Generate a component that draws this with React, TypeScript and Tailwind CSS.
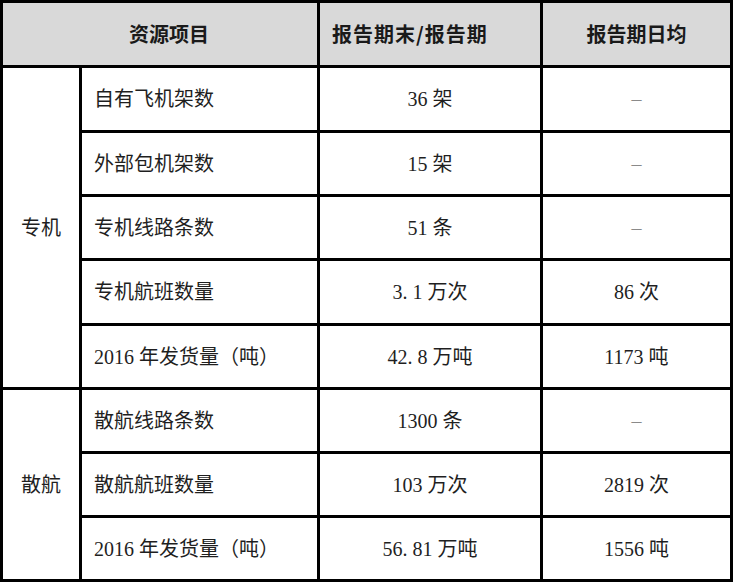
import React from 'react';

type Row = { name: string; total: string; daily: string };

const groups: { label: string; rows: Row[] }[] = [
  {
    label: '专机',
    rows: [
      { name: '自有飞机架数', total: '36 架', daily: '–' },
      { name: '外部包机架数', total: '15 架', daily: '–' },
      { name: '专机线路条数', total: '51 条', daily: '–' },
      { name: '专机航班数量', total: '3. 1 万次', daily: '86 次' },
      { name: '2016 年发货量（吨）', total: '42. 8 万吨', daily: '1173 吨' },
    ],
  },
  {
    label: '散航',
    rows: [
      { name: '散航线路条数', total: '1300 条', daily: '–' },
      { name: '散航航班数量', total: '103 万次', daily: '2819 次' },
      { name: '2016 年发货量（吨）', total: '56. 81 万吨', daily: '1556 吨' },
    ],
  },
];

const body = 'bg-white flex items-center text-[20px] text-[#1f1f1f] whitespace-pre';
const head = 'bg-[#d9d9d9] flex items-center text-[20px] font-bold text-[#1a1a1a]';

export default function App() {
  return (
    <div className="w-[734px] h-[583px] bg-white">
      <div
        className="grid w-[733px] bg-black p-[3px] gap-[3px] grid-cols-[76px_235px_220px_187px] grid-rows-[62px_62px_61px_61px_62px_61px_61px_61px_61px]"
        style={{ fontFamily: '"Liberation Serif", "Noto Sans CJK SC", serif' }}
      >
        <div
          className={`${head} col-span-2 justify-center pl-[18px]`}
          style={{ fontFamily: '"Noto Sans CJK SC", sans-serif' }}
        >
          资源项目
        </div>
        <div
          className={`${head} pl-[12px] tracking-[1px]`}
          style={{ fontFamily: '"Noto Sans CJK SC", sans-serif' }}
        >
          报告期末/报告期
        </div>
        <div
          className={`${head} justify-center`}
          style={{ fontFamily: '"Noto Sans CJK SC", sans-serif' }}
        >
          报告期日均
        </div>

        {groups.map((g) => (
          <React.Fragment key={g.label}>
            <div
              className={`${body} justify-center ${g.rows.length === 5 ? 'row-span-5' : 'row-span-3'}`}
            >
              {g.label}
            </div>
            {g.rows.map((r, i) => (
              <React.Fragment key={i}>
                <div className={`${body} pl-[12px]`}>{r.name}</div>
                <div className={`${body} justify-center`}>{r.total}</div>
                <div
                  className={`${body} justify-center ${r.daily === '–' ? 'text-[#8a8a8a]' : ''}`}
                >
                  {r.daily}
                </div>
              </React.Fragment>
            ))}
          </React.Fragment>
        ))}
      </div>
    </div>
  );
}
